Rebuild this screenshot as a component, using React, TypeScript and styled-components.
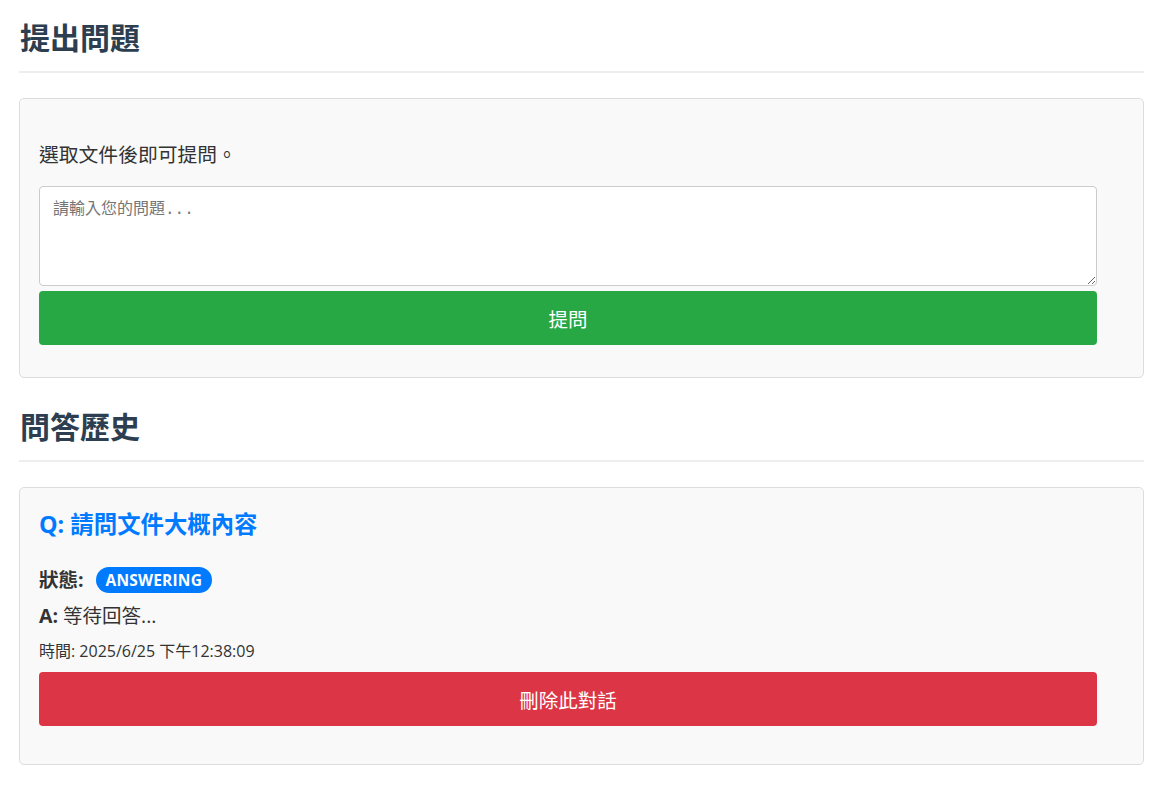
import React from "react";
import styled, { createGlobalStyle } from "styled-components";

const GlobalStyle = createGlobalStyle`
  html, body { margin: 0; padding: 0; background: #ffffff; }
  body {
    font-family: "Open Sans", "Noto Sans CJK TC", sans-serif;
    color: #333333;
  }
  * { box-sizing: border-box; }
`;

const Page = styled.div`
  padding: 20px 17px 20px 19px;
`;

const SectionTitle = styled.h2<{ $top?: number }>`
  margin: ${(p) => p.$top ?? 0}px 0 25px 0;
  padding: 0 0 15px 1px;
  font-size: 30px;
  line-height: 36px;
  font-weight: 700;
  color: #2c3e50;
  border-bottom: 2px solid #eeeeee;
`;

const Card = styled.div<{ $bottom: number }>`
  background: #f9f9f9;
  border: 1px solid #dddddd;
  border-radius: 5px;
  padding: 20px 46px ${(p) => p.$bottom}px 19px;
`;

const Hint = styled.p`
  margin: 22px 0 17px 0;
  font-size: 19.8px;
  line-height: 28px;
  color: #333333;
`;

const TextArea = styled.textarea`
  display: block;
  width: 100%;
  height: 100px;
  padding: 12px 13px;
  border: 1px solid #cccccc;
  border-radius: 4px;
  background: #ffffff;
  font-family: "Liberation Mono", "Noto Sans CJK TC", monospace;
  font-size: 16px;
  line-height: 22px;
  color: #333333;
  resize: vertical;
  &::placeholder { color: #757575; }
`;

const ActionButton = styled.button<{ $color: string; $top: number }>`
  display: block;
  width: 100%;
  height: 54px;
  margin-top: ${(p) => p.$top}px;
  border: none;
  border-radius: 4px;
  background: ${(p) => p.$color};
  color: #ffffff;
  font-family: "Open Sans", "Noto Sans CJK TC", sans-serif;
  font-size: 19.5px;
  cursor: pointer;
`;

const Question = styled.h3`
  margin: 0 0 27px 0;
  font-size: 23.4px;
  line-height: 32px;
  font-weight: 700;
  color: #007bff;
`;

const Row = styled.div<{ $size: number; $height: number; $bottom: number }>`
  display: flex;
  align-items: center;
  gap: 12px;
  font-size: ${(p) => p.$size}px;
  line-height: ${(p) => p.$height}px;
  margin-bottom: ${(p) => p.$bottom}px;
  color: #333333;
`;

const Label = styled.strong`
  font-weight: 700;
`;

const Badge = styled.span`
  display: inline-flex;
  align-items: center;
  height: 26px;
  padding: 0 10px;
  border-radius: 13px;
  background: #007bff;
  color: #ffffff;
  font-size: 15.5px;
  font-weight: 700;
  letter-spacing: 0.2px;
  text-transform: uppercase;
`;

export default function App() {
  return (
    <>
      <GlobalStyle />
      <Page>
        <SectionTitle>提出問題</SectionTitle>
        <Card $bottom={32}>
          <Hint>選取文件後即可提問。</Hint>
          <TextArea placeholder="請輸入您的問題..." />
          <ActionButton $color="#28a745" $top={5}>提問</ActionButton>
        </Card>
        <SectionTitle $top={31}>問答歷史</SectionTitle>
        <Card $bottom={38}>
          <Question>Q: 請問文件大概內容</Question>
          <Row $size={19.5} $height={26} $bottom={10}>
            <Label>狀態:</Label>
            <Badge>answering</Badge>
          </Row>
          <Row $size={19.5} $height={26} $bottom={11}>
            <span><Label>A:</Label> 等待回答...</span>
          </Row>
          <Row $size={16} $height={22} $bottom={0}>
            時間: 2025/6/25 下午12:38:09
          </Row>
          <ActionButton $color="#dc3545" $top={10}>刪除此對話</ActionButton>
        </Card>
      </Page>
    </>
  );
}
